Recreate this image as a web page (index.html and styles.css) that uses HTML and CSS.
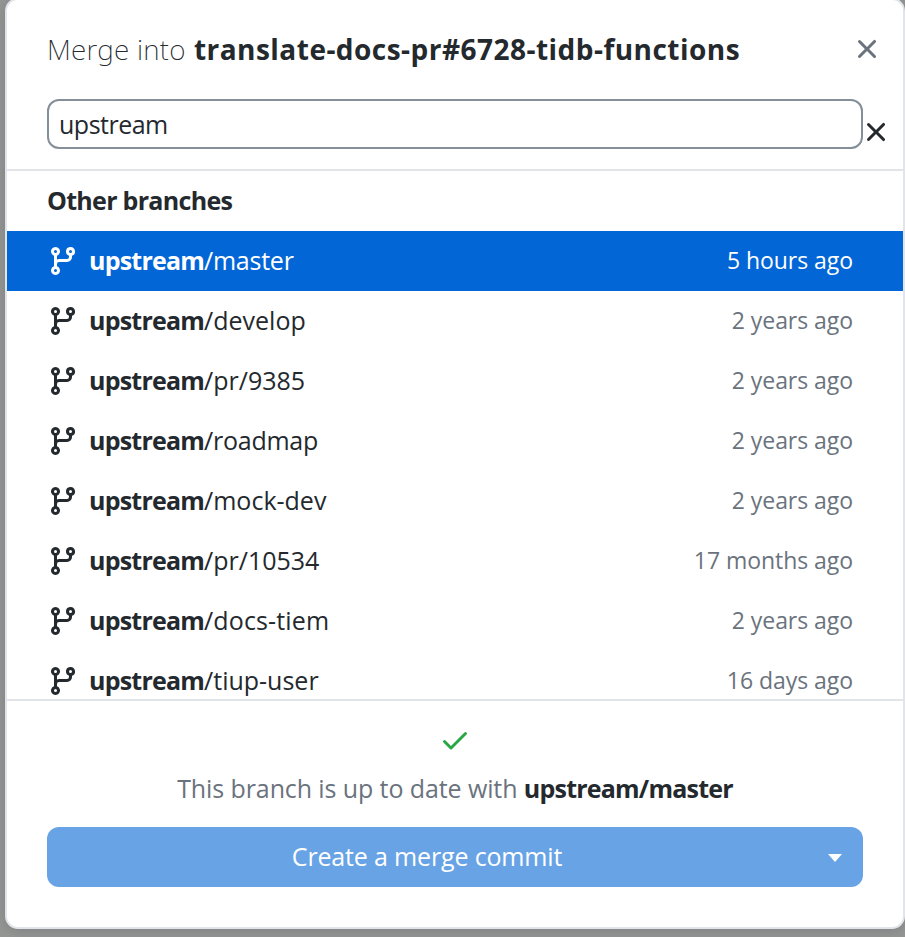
FILE: index.html
```html
<!DOCTYPE html>
<html lang="en">
<head>
<meta charset="utf-8">
<title>Merge branch</title>
<link rel="stylesheet" href="styles.css">
</head>
<body>
<svg class="defs" aria-hidden="true">
  <symbol id="branch" viewBox="0 0 16 16"><path fill-rule="evenodd" d="M11.75 2.5a.75.75 0 100 1.5.75.75 0 000-1.5zm-2.25.75a2.25 2.25 0 113 2.122V6A2.5 2.5 0 0110 8.5H6a1 1 0 00-1 1v1.128a2.251 2.251 0 11-1.5 0V5.372a2.25 2.25 0 111.5 0v1.836A2.492 2.492 0 016 7h4a1 1 0 001-1v-.628A2.25 2.25 0 019.5 3.25zM4.25 12a.75.75 0 100 1.5.75.75 0 000-1.5zM3.5 3.25a.75.75 0 111.5 0 .75.75 0 01-1.5 0z"/></symbol>
  <symbol id="x" viewBox="0 0 16 16"><path fill-rule="evenodd" d="M3.72 3.72a.75.75 0 011.06 0L8 6.94l3.22-3.22a.75.75 0 111.06 1.06L9.06 8l3.22 3.22a.75.75 0 11-1.06 1.06L8 9.06l-3.22 3.22a.75.75 0 01-1.06-1.06L6.94 8 3.72 4.78a.75.75 0 010-1.06z"/></symbol>
  <symbol id="check" viewBox="0 0 16 16"><path fill-rule="evenodd" d="M13.78 4.22a.75.75 0 010 1.06l-7.25 7.25a.75.75 0 01-1.06 0L2.22 9.28a.75.75 0 011.06-1.06L6 10.94l6.72-6.72a.75.75 0 011.06 0z"/></symbol>
</svg>
<main class="dialog">
  <header class="head">
    <h1 class="title"><span class="light">Merge into</span> <strong>translate-docs-pr#6728-tidb-functions</strong></h1>
    <svg class="icon close"><use href="#x"/></svg>
  </header>
  <div class="filter">
    <div class="field"><span>upstream</span></div>
    <svg class="icon clear"><use href="#x"/></svg>
  </div>
  <section class="list">
    <h2 class="group">Other branches</h2>
    <div class="row selected"><svg class="icon"><use href="#branch"/></svg><span class="name"><b>upstream</b><span class="tight">/master</span></span><time>5 hours ago</time></div>
    <div class="row"><svg class="icon"><use href="#branch"/></svg><span class="name"><b>upstream</b><span>/develop</span></span><time>2 years ago</time></div>
    <div class="row"><svg class="icon"><use href="#branch"/></svg><span class="name"><b>upstream</b><span>/pr/9385</span></span><time>2 years ago</time></div>
    <div class="row"><svg class="icon"><use href="#branch"/></svg><span class="name"><b>upstream</b><span class="tight">/roadmap</span></span><time>2 years ago</time></div>
    <div class="row"><svg class="icon"><use href="#branch"/></svg><span class="name"><b>upstream</b><span>/mock-dev</span></span><time>2 years ago</time></div>
    <div class="row"><svg class="icon"><use href="#branch"/></svg><span class="name"><b>upstream</b><span>/pr/10534</span></span><time>17 months ago</time></div>
    <div class="row"><svg class="icon"><use href="#branch"/></svg><span class="name"><b>upstream</b><span class="loose">/docs-tiem</span></span><time>2 years ago</time></div>
    <div class="row"><svg class="icon"><use href="#branch"/></svg><span class="name"><b>upstream</b><span>/tiup-user</span></span><time>16 days ago</time></div>
  </section>
  <footer class="foot">
    <svg class="icon ok"><use href="#check"/></svg>
    <p class="status"><span>This branch is up to date with</span> <strong>upstream/master</strong></p>
    <div class="merge"><span class="label">Create a merge commit</span><span class="more"><i class="caret"></i></span></div>
  </footer>
</main>
</body>
</html>
```
FILE: styles.css
```css
* { box-sizing: border-box; }
html, body { height: 100%; }
body {
  margin: 0;
  padding-left: 5px;
  overflow: hidden;
  background: #959795;
  color: #24292e;
  font-family: "Open Sans", "Noto Sans", sans-serif;
  font-size: 25px;
}
h1, h2, p { margin: 0; }
b, strong { font-weight: 700; }
.defs { position: absolute; width: 0; height: 0; }
.icon { display: block; flex: none; width: 32px; height: 32px; fill: currentColor; }
.dialog {
  width: 900px;
  height: 931px;
  margin-top: -2px;
  background: #fff;
  border: 2px solid #e1e4e8;
  border-radius: 13px;
  overflow: hidden;
  box-shadow: 0 2px 14px rgba(70, 75, 80, .3);
}
.head {
  display: flex;
  align-items: center;
  justify-content: space-between;
  height: 99px;
  padding: 0 20px 2px 40px;
}
.title { font-size: 28px; font-weight: 400; line-height: 40px; white-space: nowrap; }
.title strong { margin-left: 1px; letter-spacing: .47px; }
.light { font-family: "Noto Sans", "Open Sans", sans-serif; font-weight: 200; letter-spacing: .22px; }
.filter { display: flex; height: 70px; padding: 0 11px 0 40px; }
.field {
  flex: none;
  display: flex;
  align-items: center;
  width: 816px;
  height: 50px;
  padding: 0 10px 1px;
  border: 2px solid #848f99;
  border-radius: 12px;
  letter-spacing: -.5px;
}
.clear { margin: 17px 0 0 -3px; }
.list { height: 532px; border: solid #e1e4e8; border-width: 2px 0; overflow: hidden; }
.group { height: 60px; padding-left: 40px; font-size: 25px; font-weight: 700; line-height: 58px; letter-spacing: -.7px; }
.row { display: flex; align-items: center; height: 60px; padding: 0 50px 0 40px; line-height: 58px; white-space: nowrap; }
.name { flex: 1; height: 60px; padding-left: 10px; }
.name b { letter-spacing: -.78px; }
.tight { letter-spacing: -.25px; }
.loose { letter-spacing: .13px; }
.row time { height: 60px; color: #6a737d; font-size: 23px; line-height: 59px; letter-spacing: -.05px; }
.row.selected { background: #0366d6; color: #fff; }
.row.selected time { color: #fff; }
.foot { display: flex; flex-direction: column; align-items: center; padding: 23px 40px 0; }
.ok { color: #28a745; }
.status { margin-top: 12px; color: #6a737d; line-height: 40px; letter-spacing: -.1px; white-space: nowrap; }
.status strong { color: #24292e; letter-spacing: -.78px; }
.merge {
  display: flex;
  align-items: center;
  width: 816px;
  height: 60px;
  margin-top: 19px;
  border-radius: 12px;
  background: #68a3e6;
  color: #fff;
}
.label { flex: 1; padding-bottom: 2px; text-align: center; letter-spacing: -.16px; }
.more { display: flex; justify-content: center; width: 56px; }
.caret { margin-top: 1px; border: 7.5px solid transparent; border-top: 8px solid #fff; border-bottom: 0; }
.close { color: #6a737d; }
```
